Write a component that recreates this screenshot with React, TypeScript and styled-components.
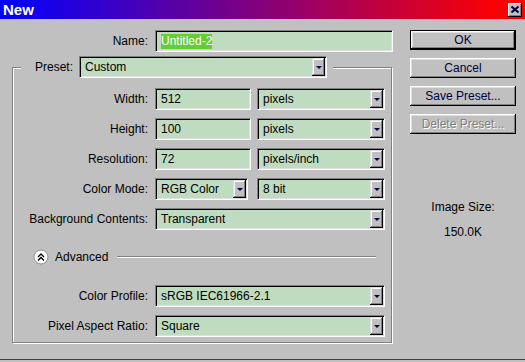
import React from 'react';
import styled, { createGlobalStyle } from 'styled-components';

const GlobalStyle = createGlobalStyle`
  html, body {
    margin: 0;
    padding: 0;
    background: #c0c0c0;
  }
  body {
    font-family: "Liberation Sans", Arial, sans-serif;
    font-size: 12px;
    color: #000;
  }
`;

const Window = styled.div`
  width: 525px;
  height: 360px;
  box-sizing: border-box;
  background: #c0c0c0;
  border-bottom: 1px solid #404040;
`;

const TitleBar = styled.div`
  height: 19px;
  display: flex;
  align-items: center;
  justify-content: space-between;
  padding: 0 3px 0 3px;
  background: linear-gradient(to right, #0000ff, #ff0000 96%);
`;

const Title = styled.span`
  color: #fff;
  font-weight: bold;
  font-size: 15px;
  line-height: 19px;
`;

const CloseButton = styled.div`
  width: 14px;
  height: 14px;
  box-sizing: border-box;
  background: #c0c0c0;
  display: flex;
  align-items: center;
  justify-content: center;
  box-shadow: inset -1px -1px 0 #000, inset 1px 1px 0 #fff, inset -2px -2px 0 #808080;
`;

const Body = styled.div`
  display: flex;
  gap: 17px;
  padding: 11px 0 0 12px;
`;

const Main = styled.div`
  width: 381px;
  display: flex;
  flex-direction: column;
  gap: 4px;
`;

const FormGrid = styled.div<{ $label: number }>`
  display: grid;
  grid-template-columns: ${p => p.$label}px 1fr;
  column-gap: 7px;
  row-gap: 8px;
  align-items: center;
`;

const Label = styled.label`
  text-align: right;
  white-space: nowrap;
`;

const Fields = styled.div<{ $gap?: number }>`
  display: flex;
  gap: ${p => p.$gap ?? 6}px;
`;

const Field = styled.div<{ $w?: number }>`
  box-sizing: border-box;
  width: ${p => (p.$w ? `${p.$w}px` : 'auto')};
  flex: ${p => (p.$w ? 'none' : '1')};
  height: 22px;
  display: flex;
  align-items: center;
  padding-left: 5px;
  background: #c0dcc0;
  border: 1px solid;
  border-color: #808080 #fff #fff #808080;
  box-shadow: inset 1px 1px 0 #000, inset -1px -1px 0 #dfdfdf;
  white-space: nowrap;
`;

const Selected = styled.span`
  background: #66cc33;
  color: #fff;
  line-height: 15px;
`;

const ArrowButton = styled.div`
  margin: 1px 1px 1px auto;
  width: 13px;
  align-self: stretch;
  box-sizing: border-box;
  background: #c0c0c0;
  display: flex;
  align-items: center;
  justify-content: center;
  box-shadow: inset -1px -1px 0 #000, inset 1px 1px 0 #dfdfdf, inset -2px -2px 0 #808080, inset 2px 2px 0 #fff;

  &::after {
    content: '';
    border-left: 3px solid transparent;
    border-right: 3px solid transparent;
    border-top: 3px solid #000040;
    margin-top: 1px;
  }
`;

const Group = styled.fieldset`
  margin: 0;
  width: 380px;
  box-sizing: border-box;
  padding: 10px 5px 5px 0;
  border: 1px solid #808080;
  box-shadow: inset 1px 1px 0 #fff, 1px 1px 0 #fff;
  min-width: 0;
`;

const Legend = styled.legend`
  margin-left: 8px;
  padding: 0 6px 0 14px;
  background: #c0c0c0;
  display: flex;
  align-items: center;
  gap: 6px;
`;

const AdvancedRow = styled.div`
  grid-column: 1 / -1;
  display: flex;
  align-items: center;
  gap: 6px;
  padding: 0 10px 0 20px;
  margin: 11px 0 12px;
`;

const Rule = styled.div`
  flex: 1;
  margin-left: 3px;
  height: 1px;
  background: #808080;
  border-bottom: 1px solid #fff;
`;

const Side = styled.div`
  width: 106px;
  display: flex;
  flex-direction: column;
  gap: 8px;
`;

const Button = styled.div<{ $default?: boolean; $disabled?: boolean }>`
  height: 20px;
  box-sizing: border-box;
  display: flex;
  align-items: center;
  justify-content: center;
  color: ${p => (p.$disabled ? '#808080' : '#000040')};
  text-shadow: ${p => (p.$disabled ? '1px 1px 0 #fff' : 'none')};
  border: ${p => (p.$default ? '1px solid #000' : 'none')};
  box-shadow: inset -1px -1px 0 #000, inset 1px 1px 0 #fff, inset -2px -2px 0 #808080, inset 2px 2px 0 #dfdfdf;
`;

const ImageSize = styled.div`
  margin-top: 58px;
  text-align: center;
  line-height: 14px;
  display: flex;
  flex-direction: column;
  gap: 11px;
`;

type SelectProps = { w?: number; value: string };

const Select: React.FC<SelectProps> = ({ w, value }) => (
  <Field $w={w}>
    <span>{value}</span>
    <ArrowButton />
  </Field>
);

const AdvancedIcon = () => (
  <svg width="16" height="16" viewBox="0 0 16 16">
    <circle cx="8" cy="8" r="7" fill="#fff" stroke="#909090" strokeWidth="1" />
    <path d="M5 8 L8 5 L11 8 M5 11.5 L8 8.5 L11 11.5" fill="none" stroke="#000" strokeWidth="1.4" />
  </svg>
);

const App: React.FC = () => {
  return (
    <>
      <GlobalStyle />
      <Window>
        <TitleBar>
          <Title>New</Title>
          <CloseButton>
            <svg width="8" height="7" viewBox="0 0 8 7">
              <path d="M0.5 0.5 L7.5 6.5 M7.5 0.5 L0.5 6.5" stroke="#000040" strokeWidth="2" />
            </svg>
          </CloseButton>
        </TitleBar>
        <Body>
          <Main>
            <FormGrid $label={136}>
              <Label>Name:</Label>
              <Field>
                <Selected>Untitled-2</Selected>
              </Field>
            </FormGrid>
            <Group>
              <Legend>
                <span>Preset:</span>
                <Select w={248} value="Custom" />
              </Legend>
              <FormGrid $label={135}>
                <Label>Width:</Label>
                <Fields>
                  <Field $w={96}>512</Field>
                  <Select w={128} value="pixels" />
                </Fields>
                <Label>Height:</Label>
                <Fields>
                  <Field $w={96}>100</Field>
                  <Select w={128} value="pixels" />
                </Fields>
                <Label>Resolution:</Label>
                <Fields>
                  <Field $w={96}>72</Field>
                  <Select w={128} value="pixels/inch" />
                </Fields>
                <Label>Color Mode:</Label>
                <Fields $gap={9}>
                  <Select w={93} value="RGB Color" />
                  <Select w={128} value="8 bit" />
                </Fields>
                <Label>Background Contents:</Label>
                <Fields>
                  <Select w={230} value="Transparent" />
                </Fields>
                <AdvancedRow>
                  <AdvancedIcon />
                  <span>Advanced</span>
                  <Rule />
                </AdvancedRow>
                <Label>Color Profile:</Label>
                <Fields>
                  <Select w={230} value="sRGB IEC61966-2.1" />
                </Fields>
                <Label>Pixel Aspect Ratio:</Label>
                <Fields>
                  <Select w={230} value="Square" />
                </Fields>
              </FormGrid>
            </Group>
          </Main>
          <Side>
            <Button $default>OK</Button>
            <Button>Cancel</Button>
            <Button>Save Preset...</Button>
            <Button $disabled>Delete Preset...</Button>
            <ImageSize>
              <span>Image Size:</span>
              <span>150.0K</span>
            </ImageSize>
          </Side>
        </Body>
      </Window>
    </>
  );
};

export default App;
